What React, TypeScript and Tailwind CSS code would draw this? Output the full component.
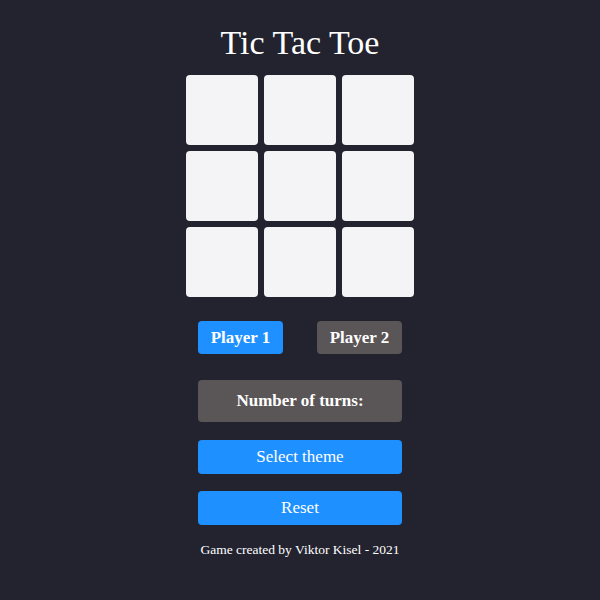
export default function App() {
    const cells = Array.from({ length: 9 });

    return (
        <div className="min-h-[600px] w-full bg-[#232330] flex flex-col items-center font-['Liberation_Serif',serif] text-white">
            <h1 className="text-[34px] leading-[37px] mt-[24px] mb-[14px]">Tic Tac Toe</h1>

            <div className="grid grid-cols-[repeat(3,72px)] grid-rows-[repeat(3,70px)] gap-[6px]">
                {cells.map((_, i) => (
                    <div key={i} className="bg-[#f4f4f6] rounded-[4px]" />
                ))}
            </div>

            <div className="w-[204px] flex flex-col mt-[24px]">
                <div className="flex justify-between">
                    <button className="w-[85px] h-[33px] rounded-[4px] bg-[#1e90ff] text-[17px] font-bold">Player 1</button>
                    <button className="w-[85px] h-[33px] rounded-[4px] bg-[#5a5556] text-[17px] font-bold">Player 2</button>
                </div>

                <div className="mt-[26px] h-[42px] rounded-[4px] bg-[#5a5556] flex items-center justify-center text-[17px] font-bold">
                    Number of turns:
                </div>

                <button className="mt-[18px] h-[34px] rounded-[4px] bg-[#1e90ff] text-[17px]">Select theme</button>
                <button className="mt-[17px] h-[34px] rounded-[4px] bg-[#1e90ff] text-[17px]">Reset</button>

                <p className="mt-[15px] text-center text-[13.5px]">Game created by Viktor Kisel - 2021</p>
            </div>
        </div>
    );
}
